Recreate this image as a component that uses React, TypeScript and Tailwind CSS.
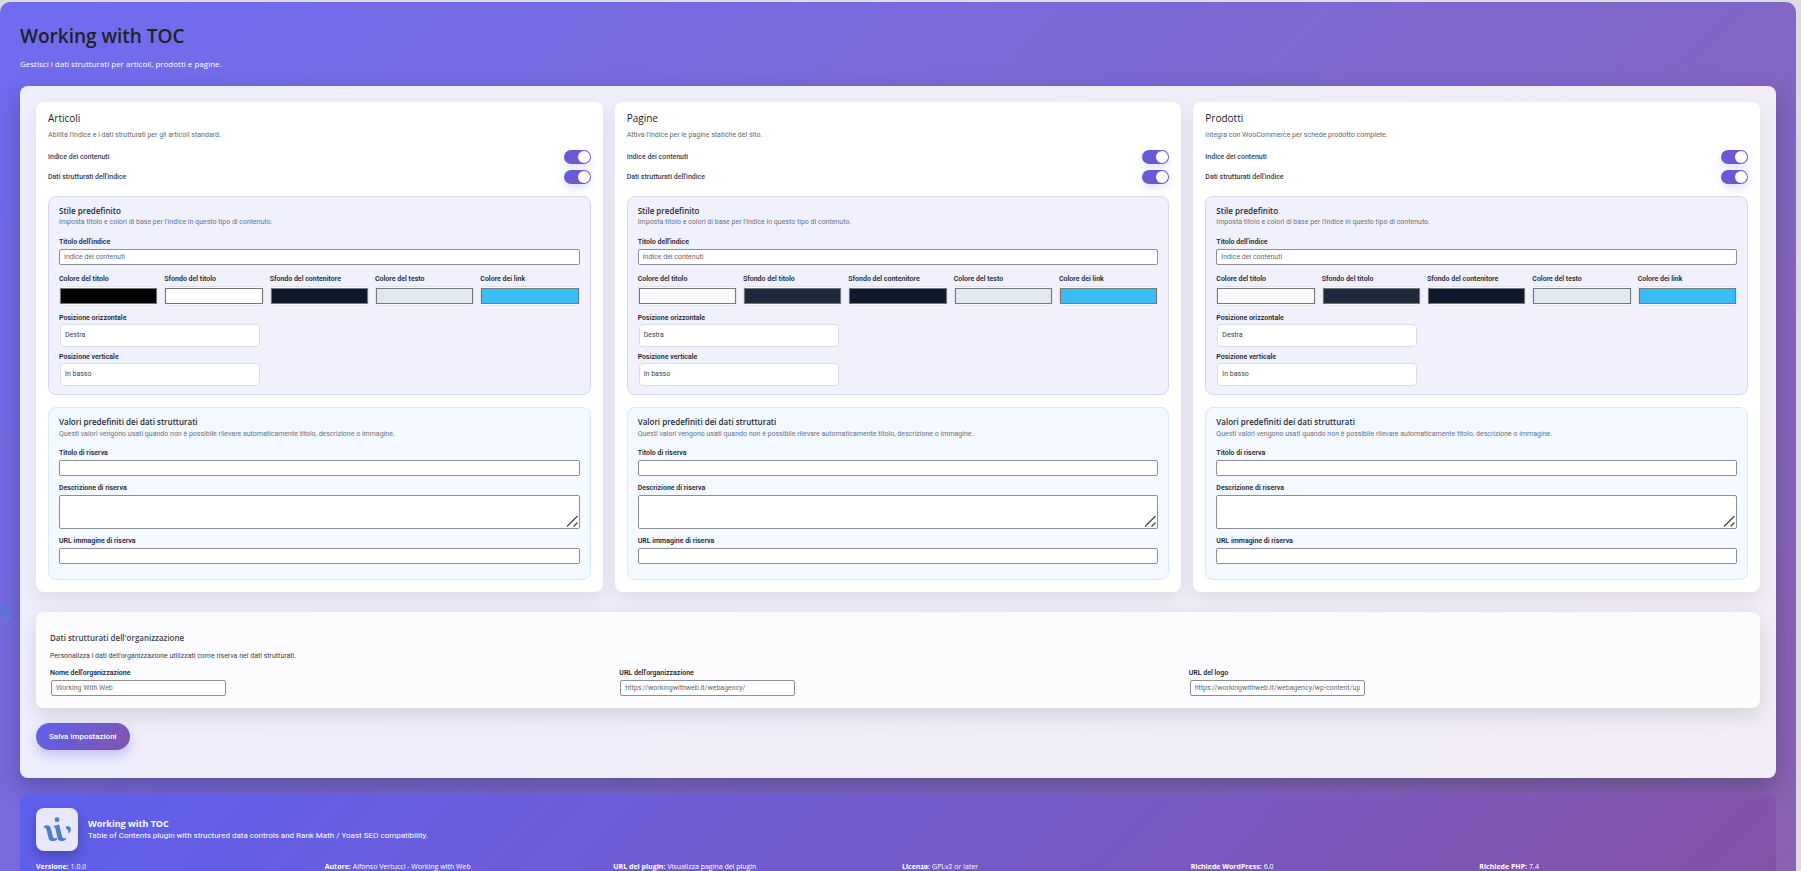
import { ReactNode } from "react";

const small = "font-['Roboto','Noto_Sans',sans-serif] text-[7px]";

function Toggle({ id, label }: { id: string; label: string }) {
  return (
    <div className="flex h-[14px] items-center justify-between">
      <label htmlFor={id} className={`${small} leading-[12px] font-medium text-[#374151]`}>{label}</label>
      <span className="flex h-[14px] w-[27px] items-center justify-end rounded-full bg-linear-135 from-[#5b5bea] to-[#7f53ac] pr-px shadow-[0_4px_8px_rgba(91,91,234,0.18)]">
        <input id={id} type="checkbox" defaultChecked className="size-3 cursor-pointer appearance-none rounded-full bg-white" />
      </span>
    </div>
  );
}

function Label({ htmlFor, tight = false, children }: { htmlFor: string; tight?: boolean; children: ReactNode }) {
  return (
    <label htmlFor={htmlFor} className={`block ${small} font-semibold text-[#1f2937] ${tight ? "leading-[11px]" : "leading-[12px]"}`}>
      {children}
    </label>
  );
}

const field =
  `block w-full rounded-[2px] border border-[#8c8f94] bg-white ${small} text-[#2c3338] placeholder:text-[#646970] outline-none`;

function TextField({ id, label, placeholder = "" }: { id: string; label: string; placeholder?: string }) {
  return (
    <div>
      <Label htmlFor={id}>{label}</Label>
      <input id={id} type="text" placeholder={placeholder} className={`${field} mt-px h-4 px-1`} />
    </div>
  );
}

function Swatch({ id, label, value }: { id: string; label: string; value: string }) {
  return (
    <div className="min-w-0">
      <Label htmlFor={id}>{label}</Label>
      <div className="mt-px rounded-[4px] border border-[#e2e2ee] bg-white py-px">
        <input
          id={id}
          type="color"
          defaultValue={value}
          className="block h-4 w-full cursor-pointer appearance-none rounded-none bg-transparent p-0 [&::-webkit-color-swatch]:rounded-none [&::-webkit-color-swatch]:border-[#777777] [&::-webkit-color-swatch-wrapper]:p-0"
        />
      </div>
    </div>
  );
}

function Select({ id, label, value }: { id: string; label: string; value: string }) {
  return (
    <div>
      <Label htmlFor={id} tight>{label}</Label>
      <select id={id} className={`ml-px block h-[23px] w-[200px] appearance-none rounded-[4px] border border-[#dcdce6] bg-white px-1 ${small} text-[#374151]`}>
        <option>{value}</option>
      </select>
    </div>
  );
}

type Kind = { key: string; title: string; desc: string; colors: string[] };

const kinds: Kind[] = [
  { key: "articoli", title: "Articoli", desc: "Abilita l'indice e i dati strutturati per gli articoli standard.", colors: ["#000000", "#ffffff", "#0f172a", "#e2e8f0", "#38bdf8"] },
  { key: "pagine", title: "Pagine", desc: "Attiva l'indice per le pagine statiche del sito.", colors: ["#f8fafc", "#1e293b", "#0f172a", "#e2e8f0", "#38bdf8"] },
  { key: "prodotti", title: "Prodotti", desc: "Integra con WooCommerce per schede prodotto complete.", colors: ["#f8fafc", "#1e293b", "#0f172a", "#e2e8f0", "#38bdf8"] },
];

const colorLabels = ["Colore del titolo", "Sfondo del titolo", "Sfondo del contenitore", "Colore del testo", "Colore dei link"];

function Card({ k }: { k: Kind }) {
  return (
    <section className="rounded-lg bg-white px-3 pt-[7px] pb-3 shadow-[0_8px_20px_rgba(15,23,42,0.08)]">
      <h2 className="text-[10px] leading-[18px] font-medium text-[#1d2327]">{k.title}</h2>
      <p className={`mt-0.5 ${small} leading-[12px] text-[#646970]`}>{k.desc}</p>
      <div className="mt-[9px] flex flex-col gap-1.5">
        <Toggle id={`${k.key}-toc`} label="Indice dei contenuti" />
        <Toggle id={`${k.key}-data`} label="Dati strutturati dell'indice" />
      </div>
      <div className="mt-3 rounded-lg border border-[#d6d6f9] bg-[#f1f1fe] px-2.5 pt-[9px] pb-2">
        <h3 className="text-[8px] leading-[10px] font-semibold text-[#1f2937]">Stile predefinito</h3>
        <p className={`${small} leading-[12px] text-[#6b7280]`}>Imposta titolo e colori di base per l'indice in questo tipo di contenuto.</p>
        <div className="mt-2">
          <TextField id={`${k.key}-title`} label="Titolo dell'indice" placeholder="Indice dei contenuti" />
        </div>
        <div className="mt-2 grid grid-cols-5 gap-1.5">
          {colorLabels.map((l, i) => (
            <Swatch key={l} id={`${k.key}-color-${i}`} label={l} value={k.colors[i]} />
          ))}
        </div>
        <div className="mt-[7px] flex flex-col gap-[5px]">
          <Select id={`${k.key}-h`} label="Posizione orizzontale" value="Destra" />
          <Select id={`${k.key}-v`} label="Posizione verticale" value="In basso" />
        </div>
      </div>
      <div className="mt-3 rounded-lg border border-[#dbe7fd] bg-[#f4f8ff] px-2.5 pt-2 pb-[15px]">
        <h3 className="text-[8px] leading-[12px] font-semibold text-[#1f2937]">Valori predefiniti dei dati strutturati</h3>
        <p className={`${small} leading-[12px] text-[#6b7280]`}>
          Questi valori vengono usati quando non è possibile rilevare automaticamente titolo, descrizione o immagine.
        </p>
        <div className="mt-[7px] flex flex-col gap-1.5">
          <TextField id={`${k.key}-fallback-title`} label="Titolo di riserva" />
          <div>
            <Label htmlFor={`${k.key}-fallback-desc`}>Descrizione di riserva</Label>
            <div className="relative mt-px">
              <textarea id={`${k.key}-fallback-desc`} className={`${field} h-[34px] resize-none px-1`} />
              <svg viewBox="0 0 12 12" className="pointer-events-none absolute right-0.5 bottom-0.5 size-3" stroke="#4b4b4b" strokeWidth="1.4" aria-hidden="true">
                <path d="M1 11.5 L11.5 1 M7.5 11.5 L11.5 7.5" />
              </svg>
            </div>
          </div>
          <TextField id={`${k.key}-fallback-image`} label="URL immagine di riserva" />
        </div>
      </div>
    </section>
  );
}

const organization = [
  ["org-name", "Nome dell'organizzazione", "Working With Web"],
  ["org-url", "URL dell'organizzazione", "https://workingwithweb.it/webagency/"],
  ["org-logo", "URL del logo", "https://workingwithweb.it/webagency/wp-content/uploads/logo.png"],
];

const meta = [
  ["Versione:", "1.0.0"],
  ["Autore:", "Alfonso Vertucci - Working with Web"],
  ["URL del plugin:", "Visualizza pagina del plugin"],
  ["Licenza:", "GPLv2 or later"],
  ["Richiede WordPress:", "6.0"],
  ["Richiede PHP:", "7.4"],
];

function Logo() {
  return (
    <svg viewBox="0 0 42 43" className="h-[43px] w-[42px]" fill="#4a7fd0" aria-hidden="true">
      <circle cx="21" cy="11.7" r="2.4" />
      <path d="M7.6 18.2 C10 16.9 13.8 16.6 14.7 20 L16.8 28.2 C17.3 30.2 18.8 31 20.8 29.8 L21.4 31.2 C19 34 13.6 34 12.6 30.2 L10.4 21.6 C10 19.8 9 19.2 7.8 19.5 Z" />
      <path d="M17.8 18 L23.2 16.6 L26 28 C26.5 30.2 27.8 30.9 29.6 29.7 L30.2 31 C28 34 22.6 34 21.7 30.2 L19.5 21 C19.2 19.6 18.8 19.2 17.8 19.2 Z" />
      <path d="M30 18.6 C32.6 17.2 35.4 19.2 34.9 22 C34.6 23.8 33.4 25.2 32.2 25.6 C32.8 23.4 32.2 21.6 30 20.6 Z" />
    </svg>
  );
}

export default function App() {
  return (
    <div className="h-screen overflow-hidden bg-[#dcdcde] pt-0.5 pr-[5px] font-['Open_Sans','Noto_Sans',sans-serif]">
      <main className="relative rounded-t-[10px] bg-linear-135 from-[#6f6cf2] to-[#8c62b0] px-5 pt-[22px] pb-5">
        <svg viewBox="0 0 11 24" className="absolute top-[602px] left-0 h-6 w-[11px]" aria-hidden="true">
          <path d="M0 1 C5 -1 11 4 10.5 12 C10 18 7 22 4 23.5 C5 16 4 11 0 9 Z" fill="#5e74d6" />
        </svg>
        <h1 className="text-[19px] leading-6 font-semibold text-[#1d2327]">Working with TOC</h1>
        <p className="mt-2.5 text-[8px] leading-[12px] font-medium text-white">Gestisci i dati strutturati per articoli, prodotti e pagine.</p>

        <form className="mt-4 rounded-lg bg-linear-135 from-[#eeeefd] to-[#f2edf7] px-4 pt-4 pb-7 shadow-[0_10px_24px_rgba(15,23,42,0.3)]">
          <div className="grid grid-cols-3 gap-3">
            {kinds.map((k) => (
              <Card key={k.key} k={k} />
            ))}
          </div>
          <section className="mt-5 rounded-lg bg-[#fcfcfe] px-3.5 pt-5 pb-3 shadow-[0_8px_20px_rgba(15,23,42,0.12)]">
            <h2 className="text-[8px] leading-[12px] font-semibold text-[#3c434a]">Dati strutturati dell'organizzazione</h2>
            <p className={`mt-1.5 ${small} leading-[12px] text-[#3c434a]`}>Personalizza i dati dell'organizzazione utilizzati come riserva nei dati strutturati.</p>
            <div className="mt-[5px] grid grid-cols-3 gap-3">
              {organization.map(([id, label, value]) => (
                <div key={id}>
                  <Label htmlFor={id}>{label}</Label>
                  <input id={id} type="text" placeholder={value} className={`${field} mt-px ml-px h-4 max-w-[175px] px-1`} />
                </div>
              ))}
            </div>
          </section>
          <button type="button" className="mt-[15px] block h-[27px] rounded-full bg-linear-135 from-[#5d5fef] to-[#7f53ac] px-[13px] font-['Roboto','Noto_Sans',sans-serif] text-[8px] font-medium text-white shadow-[0_6px_12px_rgba(93,95,239,0.3)]">
            Salva impostazioni
          </button>
        </form>

        <footer className="mt-4 rounded-lg bg-linear-135 from-[#5d5fef] to-[#8552a8] px-4 pt-3.5 pb-4 text-white">
          <div className="flex items-center gap-2.5">
            <div className="rounded-lg bg-[#e8e7fb] shadow-[0_6px_12px_rgba(15,23,42,0.3)]">
              <Logo />
            </div>
            <div>
              <strong className="block text-[9px] leading-[13px] font-bold">Working with TOC</strong>
              <p className="font-['Roboto','Noto_Sans',sans-serif] text-[8px] leading-[12px]">Table of Contents plugin with structured data controls and Rank Math / Yoast SEO compatibility.</p>
            </div>
          </div>
          <dl className="mt-2.5 grid grid-cols-6 gap-2">
            {meta.map(([t, v]) => (
              <div key={t} className="flex gap-0.5 text-[7px] leading-[12px] whitespace-nowrap">
                <dt className="font-bold">{t}</dt>
                <dd>{v}</dd>
              </div>
            ))}
          </dl>
        </footer>
      </main>
    </div>
  );
}
